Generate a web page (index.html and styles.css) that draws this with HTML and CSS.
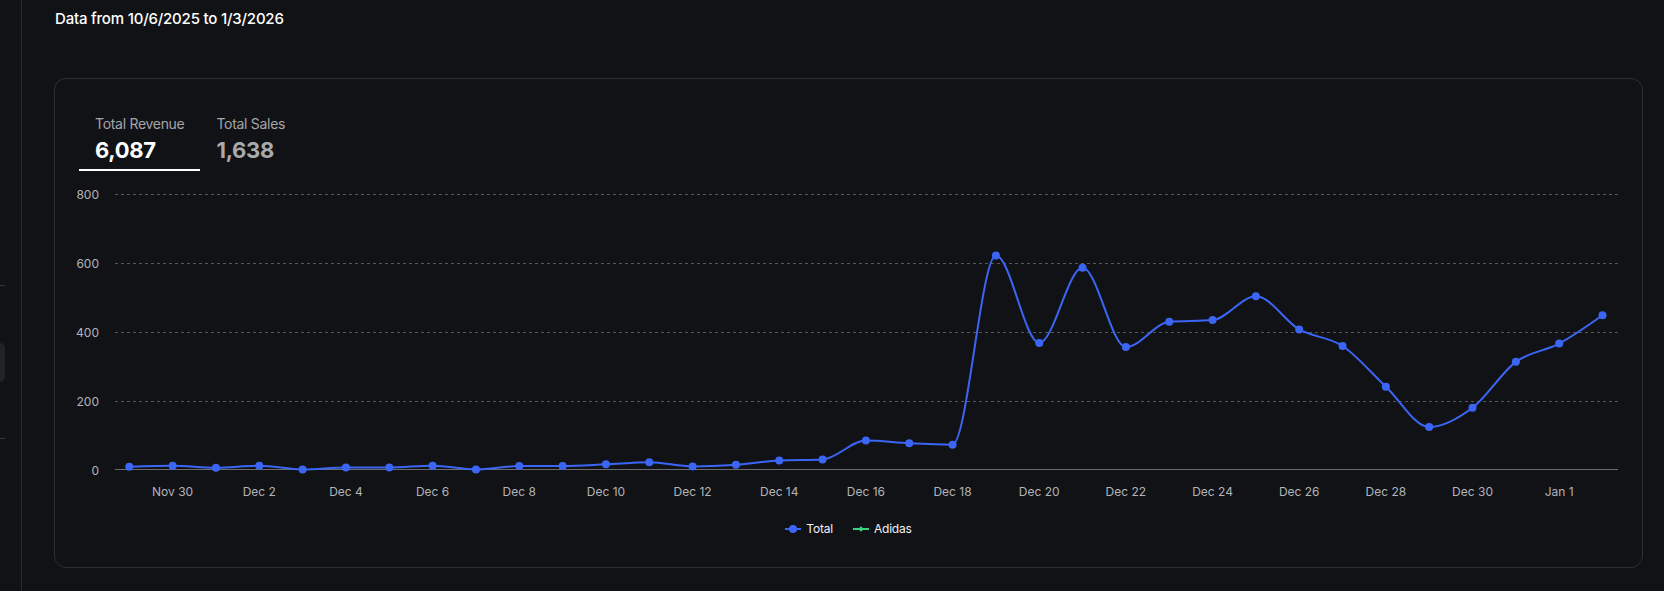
FILE: index.html
```html
<!DOCTYPE html>
<html lang="en">
<head>
<meta charset="utf-8">
<title>Revenue</title>
<link rel="stylesheet" href="styles.css">
</head>
<body>
<div class="layout">
  <aside class="sidebar">
    <div class="side-divider"></div>
    <div class="side-item"></div>
    <div class="side-divider side-divider-2"></div>
  </aside>
  <main class="main">
    <h1 class="title">Data from 10/6/2025 to 1/3/2026</h1>
    <section class="card">
      <div class="tabs">
        <div class="tab active">
          <div class="tab-label">Total Revenue</div>
          <div class="tab-value">6,087</div>
        </div>
        <div class="tab">
          <div class="tab-label">Total Sales</div>
          <div class="tab-value">1,638</div>
        </div>
      </div>
      <svg id="chart" class="chart" width="1587" height="339" viewBox="55 171 1587 339" xmlns="http://www.w3.org/2000/svg"></svg>
      <div class="legend">
        <div class="legend-item">
          <svg class="legend-icon" width="16" height="10" viewBox="0 0 16 10"><line x1="0" y1="5" x2="16" y2="5" stroke="#3b66f5" stroke-width="2"/><circle cx="8" cy="5" r="4" fill="#3b66f5"/></svg>
          <span>Total</span>
        </div>
        <div class="legend-item">
          <svg class="legend-icon" width="16" height="10" viewBox="0 0 16 10"><line x1="0" y1="5" x2="16" y2="5" stroke="#3ad27f" stroke-width="2"/><path d="M8 2.2 L10.8 5 L8 7.8 L5.2 5 Z" fill="#3ad27f"/></svg>
          <span>Adidas</span>
        </div>
      </div>
    </section>
  </main>
</div>
<script src="script.js"></script>
</body>
</html>
```

FILE: styles.css
```css
* { box-sizing: border-box; }
html, body {
  margin: 0;
  padding: 0;
  background: #111216;
  color: #f2f2f3;
  font-family: Inter, "Noto Sans", "Liberation Sans", sans-serif;
}
.layout {
  display: flex;
  width: 1664px;
  height: 591px;
  overflow: hidden;
}
.sidebar {
  width: 22px;
  flex: none;
  border-right: 1px solid #2a2b2f;
  display: flex;
  flex-direction: column;
  padding-top: 285px;
}
.side-divider {
  width: 5px;
  height: 1px;
  background: #34353a;
}
.side-item {
  width: 5px;
  height: 39px;
  margin-top: 57px;
  background: #222327;
  border-radius: 0 6px 6px 0;
}
.side-divider-2 { margin-top: 56px; }
.main {
  flex: 1;
  padding: 7px 21px 0 32px;
}
.title {
  margin: 0 0 47px 1px;
  font-size: 15px;
  line-height: 24px;
  font-weight: 500;
  letter-spacing: -0.2px;
  color: #ffffff;
}
.card {
  width: 1589px;
  height: 490px;
  border: 1px solid #2e2f34;
  border-radius: 12px;
  background: #111216;
  display: flex;
  flex-direction: column;
}
.tabs {
  display: flex;
  padding: 35px 0 0 24px;
}
.tab {
  padding: 0 16px 3px;
  border-bottom: 2px solid transparent;
}
.tab.active { border-bottom-color: #ffffff; }
.tab-label {
  font-size: 14px;
  line-height: 20px;
  letter-spacing: -0.3px;
  color: #a4a5aa;
}
.tab-value {
  font-size: 22px;
  line-height: 32px;
  font-weight: 700;
  letter-spacing: -0.3px;
  color: #a9aaae;
}
.tab.active .tab-value { color: #ffffff; }
.chart { display: block; }
.legend {
  display: flex;
  justify-content: center;
  gap: 20px;
  margin-top: 9px;
  font-size: 12px;
  line-height: 20px;
  font-weight: 400;
  letter-spacing: -0.2px;
  color: #f0f0f2;
}
.legend-item {
  display: flex;
  align-items: center;
  gap: 5px;
}
.legend-icon { display: block; }
```

FILE: script.js
```js
(function () {
  var NS = "http://www.w3.org/2000/svg";
  var svg = document.getElementById("chart");
  var values = [8,11,5,11,0,6,6,11,0,10,10,15,21,9,14,26,29,84,76,72,620,367,585,355,428,433,502,406,358,240,123,179,312,365,447];
  var x0 = 129.3, step = 43.33;
  var yZero = 469.5, k = 0.345;
  var gridL = 115, gridR = 1618;
  function X(i) { return x0 + i * step; }
  function Y(v) { return yZero - v * k; }
  function el(name, attrs, text) {
    var e = document.createElementNS(NS, name);
    for (var a in attrs) e.setAttribute(a, attrs[a]);
    if (text !== undefined) e.textContent = text;
    svg.appendChild(e);
    return e;
  }
  // grid + y labels
  [200, 400, 600, 800].forEach(function (v) {
    var y = Math.round(Y(v)) + 0.5;
    el("line", { x1: gridL, x2: gridR, y1: y, y2: y, stroke: "#55565b", "stroke-width": 1, "stroke-dasharray": "3 3" });
  });
  [0, 200, 400, 600, 800].forEach(function (v) {
    var y = Math.round(Y(v)) + 0.5;
    el("text", { x: 99, y: y + 4, "text-anchor": "end", "font-size": 12, fill: "#b3b4b8", "font-family": "Inter, sans-serif" }, String(v));
  });
  el("line", { x1: gridL, x2: gridR, y1: 469.5, y2: 469.5, stroke: "#6a6b70", "stroke-width": 1 });
  // x labels
  var labels = ["Nov 30"];
  for (var d = 2; d <= 30; d += 2) labels.push("Dec " + d);
  labels.push("Jan 1");
  labels.forEach(function (t, j) {
    el("text", { x: X(1 + 2 * j), y: 496, "text-anchor": "middle", "font-size": 12, fill: "#b3b4b8", "font-family": "Inter, sans-serif" }, t);
  });
  // monotone X curve
  var xs = values.map(function (v, i) { return X(i); });
  var ys = values.map(function (v) { return Y(v); });
  var n = xs.length, t = new Array(n);
  function sign(v) { return v < 0 ? -1 : 1; }
  for (var i = 1; i < n - 1; i++) {
    var h0 = xs[i] - xs[i - 1], h1 = xs[i + 1] - xs[i];
    var s0 = (ys[i] - ys[i - 1]) / h0, s1 = (ys[i + 1] - ys[i]) / h1;
    var p = (s0 * h1 + s1 * h0) / (h0 + h1);
    t[i] = (sign(s0) + sign(s1)) * Math.min(Math.abs(s0), Math.abs(s1), 0.5 * Math.abs(p)) || 0;
  }
  t[0] = (3 * (ys[1] - ys[0]) / (xs[1] - xs[0]) - t[1]) / 2;
  t[n - 1] = (3 * (ys[n - 1] - ys[n - 2]) / (xs[n - 1] - xs[n - 2]) - t[n - 2]) / 2;
  var dstr = "M" + xs[0].toFixed(2) + "," + ys[0].toFixed(2);
  for (var s = 0; s < n - 1; s++) {
    var dx = (xs[s + 1] - xs[s]) / 3;
    dstr += "C" + (xs[s] + dx).toFixed(2) + "," + (ys[s] + dx * t[s]).toFixed(2) + "," +
      (xs[s + 1] - dx).toFixed(2) + "," + (ys[s + 1] - dx * t[s + 1]).toFixed(2) + "," +
      xs[s + 1].toFixed(2) + "," + ys[s + 1].toFixed(2);
  }
  el("path", { d: dstr, fill: "none", stroke: "#3b66f5", "stroke-width": 2 });
  for (var q = 0; q < n; q++) {
    el("circle", { cx: xs[q], cy: ys[q], r: 4, fill: "#3b66f5" });
  }
})();
```
